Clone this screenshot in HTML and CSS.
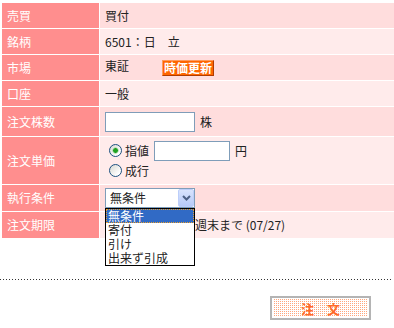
FILE: index.html
```html
<!DOCTYPE html>
<html lang="ja">
<head>
    <meta charset="UTF-8">
    <meta name="viewport" content="width=device-width, initial-scale=1.0">
    <title>注文入力</title>
    <link rel="stylesheet" href="styles.css">
</head>
<body>

    <div class="page">
        <table class="order">
            <tr class="row-a">
                <th>売買</th>
                <td>買付</td>
            </tr>
            <tr class="row-b">
                <th>銘柄</th>
                <td>6501：日　立</td>
            </tr>
            <tr class="row-a">
                <th>市場</th>
                <td>東証<span class="badge">時価更新</span></td>
            </tr>
            <tr class="row-b">
                <th>口座</th>
                <td>一般</td>
            </tr>
            <tr class="row-a row-qty">
                <th>注文株数</th>
                <td><input type="text" class="text-box qty"><span class="unit">株</span></td>
            </tr>
            <tr class="row-b row-price">
                <th>注文単価</th>
                <td>
                    <div class="price-line">
                        <label class="choice"><input type="radio" name="price" checked>指値</label>
                        <input type="text" class="text-box price"><span class="unit">円</span>
                    </div>
                    <div class="price-line">
                        <label class="choice"><input type="radio" name="price">成行</label>
                    </div>
                </td>
            </tr>
            <tr class="row-a row-cond">
                <th>執行条件</th>
                <td>
                    <!-- dropdown shown in its open state -->
                    <div class="select-wrap">
                        <div class="select">
                            <span class="select-value">無条件</span>
                            <span class="select-arrow">
                                <svg width="9" height="6" viewBox="0 0 9 6"><path d="M1 1 L4.5 4.5 L8 1" fill="none" stroke="#4d6185" stroke-width="2"/></svg>
                            </span>
                        </div>
                        <ul class="select-list">
                            <li class="selected">無条件</li>
                            <li>寄付</li>
                            <li>引け</li>
                            <li>出来ず引成</li>
                        </ul>
                    </div>
                </td>
            </tr>
            <tr class="row-b row-term">
                <th>注文期限</th>
                <td><span class="term">週末まで (07/27)</span></td>
            </tr>
        </table>

        <div class="divider"></div>

        <div class="actions">
            <button class="submit">注　文</button>
        </div>
    </div>

</body>
</html>
```

FILE: styles.css
```css
body {
    margin: 0;
    overflow: hidden;
    background-color: #fff;
    font-family: "Noto Sans CJK JP", "DejaVu Sans", sans-serif;
    font-size: 12px;
    color: #222;
}

.page {
    width: 394px;
    overflow: hidden;
}

/* Order table */
.order {
    margin: 2px 0 0 1px;
    width: 400px;
    border-spacing: 1px;
    table-layout: fixed;
}

.order th,
.order td {
    box-sizing: border-box;
    height: 25px;
    padding: 0 0 0 5px;
    line-height: 14px;
    vertical-align: middle;
    text-align: left;
}

.order th {
    width: 97px;
    background-color: #ff8e8e;
    color: #fff;
    font-weight: normal;
}

.row-a td {
    background-color: #ffdddd;
}

.row-b td {
    background-color: #ffebeb;
}

.row-qty th,
.row-qty td {
    height: 29px;
}

.row-price th,
.row-price td {
    height: 47px;
}

.row-cond th,
.row-cond td {
    height: 26px;
}

.row-term th,
.row-term td {
    height: 26px;
}

.badge {
    display: inline-block;
    margin-left: 33px;
    padding: 0 1px;
    height: 14px;
    line-height: 14px;
    vertical-align: middle;
    background-color: #ff6600;
    border: 1px solid;
    border-color: #ff9a5c #b03c00 #b03c00 #ff9a5c;
    color: #fff;
    font-weight: bold;
    font-size: 12px;
}

.text-box {
    box-sizing: border-box;
    height: 20px;
    margin: 0;
    padding: 1px 3px;
    border: 1px solid #7f9db9;
    background-color: #fff;
    font-family: inherit;
    font-size: 12px;
    vertical-align: middle;
}

.qty {
    width: 90px;
}

.price {
    width: 76px;
    margin-left: 5px;
}

.unit {
    margin-left: 5px;
    vertical-align: middle;
}

.price-line {
    display: flex;
    align-items: center;
    height: 20px;
}

.choice {
    display: flex;
    align-items: center;
    margin-left: 4px;
}

.choice input {
    appearance: none;
    -webkit-appearance: none;
    box-sizing: border-box;
    width: 13px;
    height: 13px;
    margin: 0 3px 0 0;
    border: 1px solid #1c5180;
    border-radius: 50%;
    background: linear-gradient(135deg, #d8d8d2, #fff 80%);
}

.choice input:checked {
    background: radial-gradient(circle, #21a121 0 2px, #8fd08f 2.5px, transparent 3.5px),
                linear-gradient(135deg, #d8d8d2, #fff 80%);
}

/* Execution condition dropdown */
.select-wrap {
    position: relative;
    width: 90px;
}

.select {
    box-sizing: border-box;
    display: flex;
    align-items: center;
    height: 20px;
    border: 1px solid #7f9db9;
    background-color: #fff;
}

.select-value {
    padding-left: 4px;
    flex: 1;
}

.select-arrow {
    box-sizing: border-box;
    display: flex;
    align-items: center;
    justify-content: center;
    width: 16px;
    height: 18px;
    border: 1px solid #bccefa;
    border-radius: 2px;
    background: linear-gradient(#d9e4fd, #b6c9f8);
}

.select-list {
    position: absolute;
    top: 100%;
    left: 0;
    z-index: 1;
    box-sizing: border-box;
    width: 90px;
    margin: 0;
    padding: 0;
    list-style: none;
    border: 1px solid #000;
    background-color: #fff;
}

.select-list li {
    box-sizing: border-box;
    height: 14px;
    line-height: 13px;
    padding-left: 2px;
}

.select-list .selected {
    background-color: #316ac5;
    color: #fff;
    outline: 1px dotted #e8a030;
    outline-offset: -1px;
}

/* the open list covers the start of this cell */
.term {
    margin-left: 90px;
}

/* Footer */
.divider {
    margin: 40px 2px 0 0;
    height: 1px;
    background-image: repeating-linear-gradient(90deg, #333 0 1px, transparent 1px 3px);
}

.actions {
    display: flex;
    justify-content: flex-end;
    padding: 16px 23px 0 0;
}

.submit {
    box-sizing: border-box;
    width: 101px;
    height: 24px;
    padding: 0;
    border: 2px solid #b4b4b4;
    box-shadow: inset 0 0 0 1px #fff;
    background-color: #fff;
    background-image: repeating-linear-gradient(90deg, transparent 0 1px, #fff 1px 2px),
                      repeating-linear-gradient(0deg, #ffa67c 0 1px, #fff 1px 2px);
    color: #ff6a2a;
    font-family: inherit;
    font-size: 13px;
    font-weight: bold;
    cursor: pointer;
}
```
